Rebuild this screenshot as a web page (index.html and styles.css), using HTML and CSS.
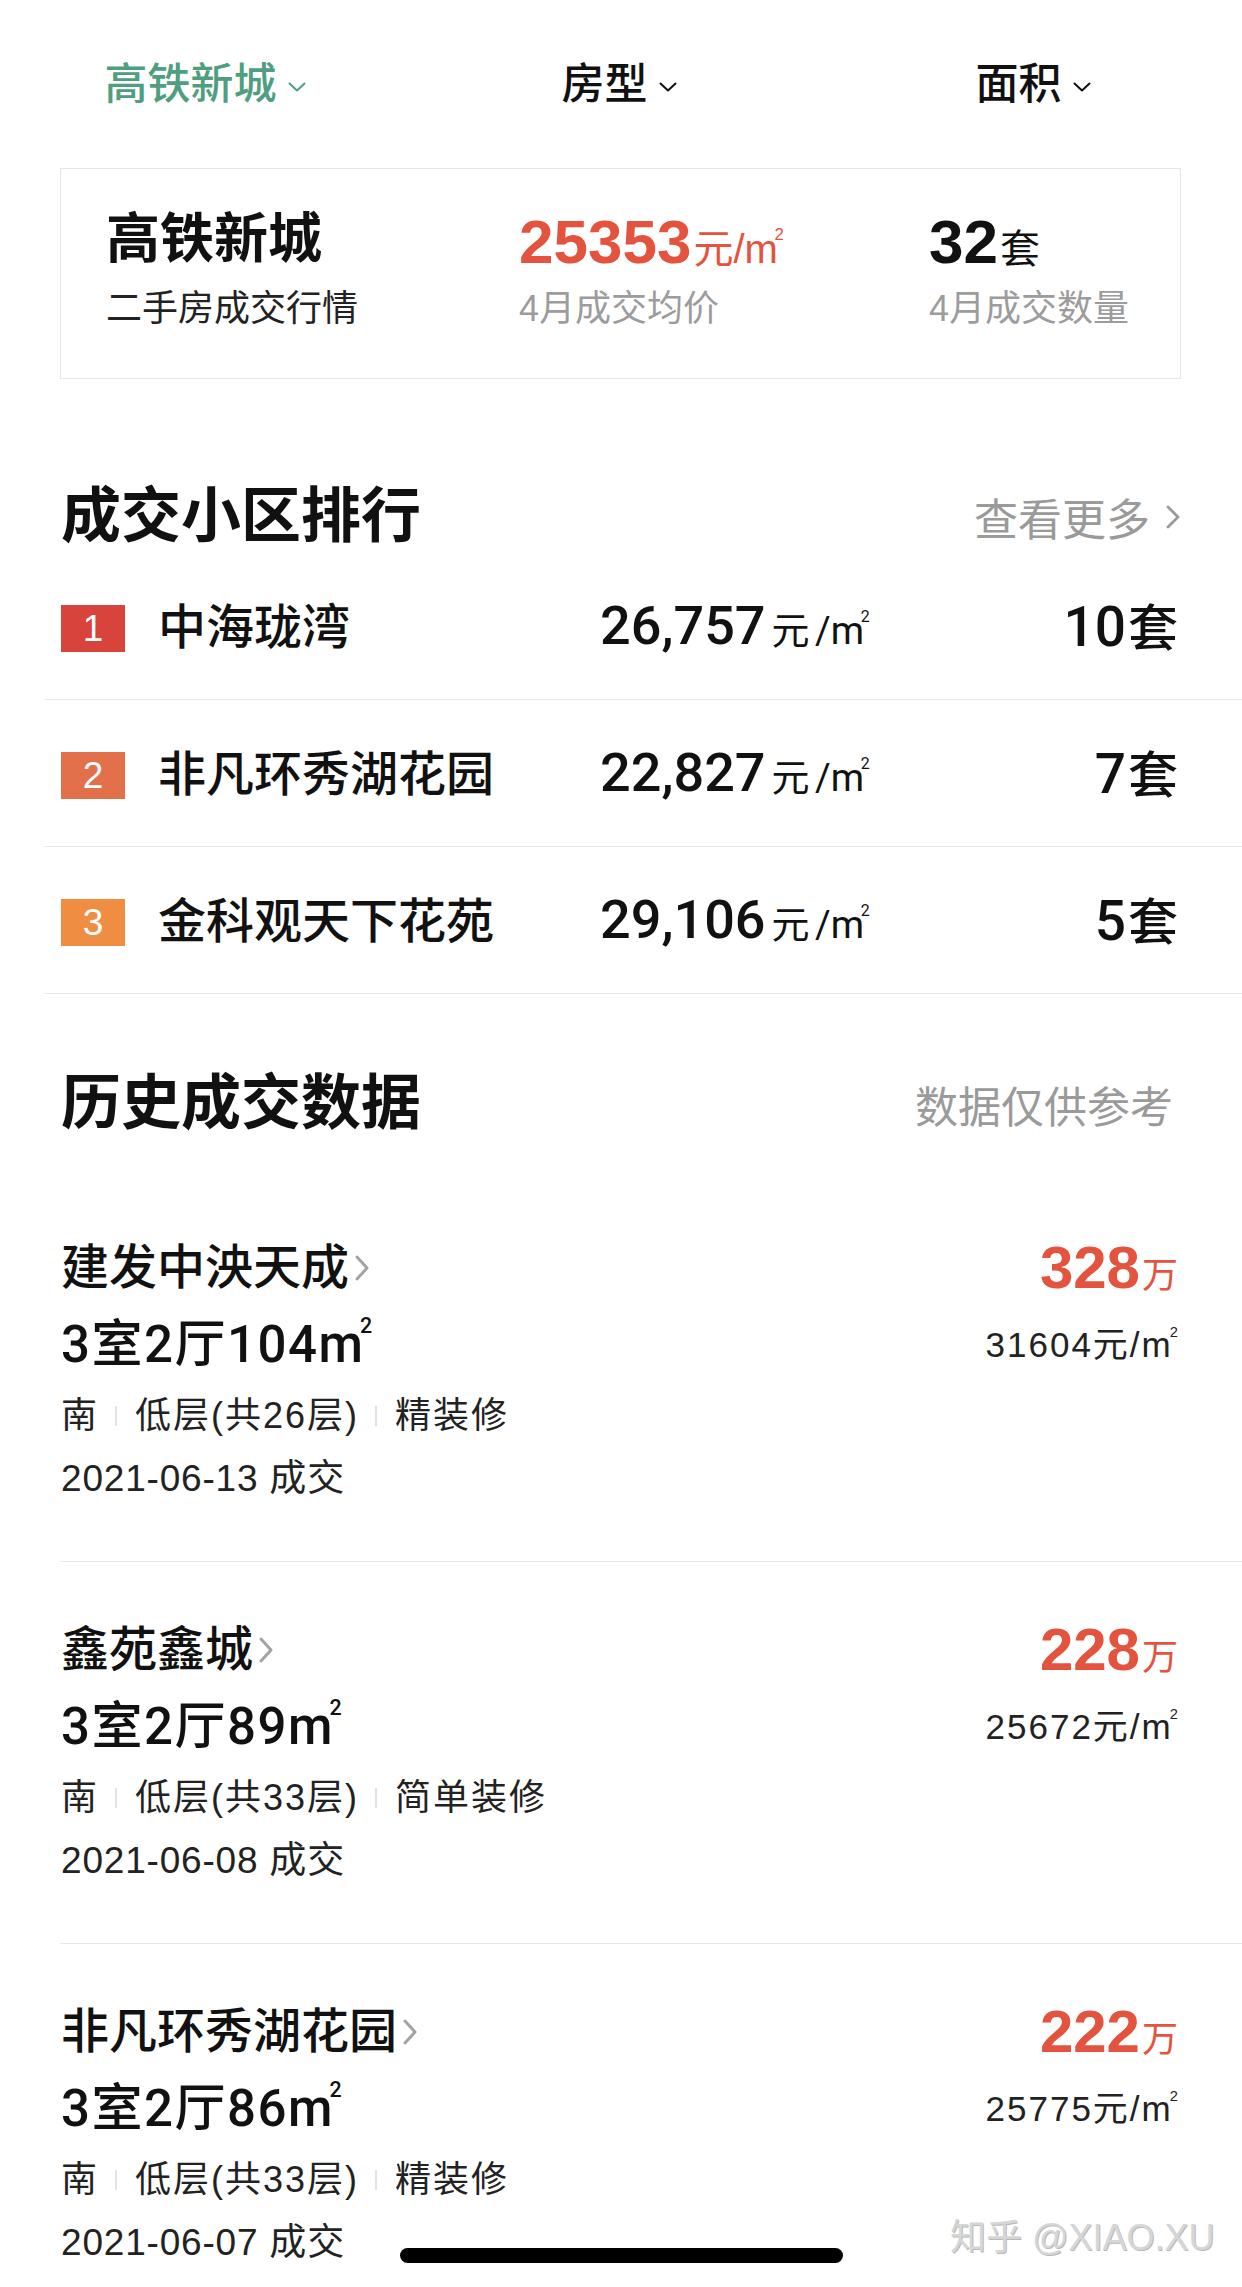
FILE: index.html
```html
<!DOCTYPE html>
<html lang="zh-CN">
<head>
<meta charset="utf-8">
<title>成交行情</title>
<link rel="stylesheet" href="styles.css">
</head>
<body>
<div class="page">
  <nav class="tabs">
    <div class="tab active"><span>高铁新城</span><svg class="caret" viewBox="0 0 18 10"><polyline points="1.5,1.5 9,8.5 16.5,1.5"/></svg></div>
    <div class="tab"><span>房型</span><svg class="caret" viewBox="0 0 18 10"><polyline points="1.5,1.5 9,8.5 16.5,1.5"/></svg></div>
    <div class="tab"><span>面积</span><svg class="caret" viewBox="0 0 18 10"><polyline points="1.5,1.5 9,8.5 16.5,1.5"/></svg></div>
  </nav>

  <section class="summary">
    <div class="sum-col">
      <div class="sum-title">高铁新城</div>
      <div class="sum-sub dark">二手房成交行情</div>
    </div>
    <div class="sum-col">
      <div class="sum-val red"><b>25353</b><span class="sum-unit">元/m<i class="sq">2</i></span></div>
      <div class="sum-sub">4月成交均价</div>
    </div>
    <div class="sum-col">
      <div class="sum-val"><b>32</b><span class="sum-unit">套</span></div>
      <div class="sum-sub">4月成交数量</div>
    </div>
  </section>

  <div class="sec-head rank-head">
    <h2>成交小区排行</h2>
    <span class="more">查看更多<svg class="more-chev" viewBox="0 0 16 26"><polyline points="3,3 13,13 3,23"/></svg></span>
  </div>

  <div class="rank-list">
    <div class="rank-row">
      <span class="badge b1">1</span>
      <span class="rk-name">中海珑湾</span>
      <span class="rk-price">26,757<span class="rk-unit">元 /m<i class="sq">2</i></span></span>
      <span class="rk-count">10<span class="tao">套</span></span>
    </div>
    <div class="rank-row">
      <span class="badge b2">2</span>
      <span class="rk-name">非凡环秀湖花园</span>
      <span class="rk-price">22,827<span class="rk-unit">元 /m<i class="sq">2</i></span></span>
      <span class="rk-count">7<span class="tao">套</span></span>
    </div>
    <div class="rank-row">
      <span class="badge b3">3</span>
      <span class="rk-name">金科观天下花苑</span>
      <span class="rk-price">29,106<span class="rk-unit">元 /m<i class="sq">2</i></span></span>
      <span class="rk-count">5<span class="tao">套</span></span>
    </div>
  </div>

  <div class="sec-head hist-head">
    <h2>历史成交数据</h2>
    <span class="note">数据仅供参考</span>
  </div>

  <div class="records">
    <div class="record">
      <div class="r-left">
        <div class="r-name">建发中泱天成<svg class="r-chev" viewBox="0 0 16 28"><polyline points="3,3 13,14 3,25"/></svg></div>
        <div class="r-rooms">3室2厅104m<i class="sq">2</i></div>
        <div class="r-meta">南<span class="vbar"></span>低层(共26层)<span class="vbar"></span>精装修</div>
        <div class="r-date">2021-06-13 成交</div>
      </div>
      <div class="r-right">
        <div class="r-price">328<span class="wan">万</span></div>
        <div class="r-unit">31604元/m<i class="sq">2</i></div>
      </div>
    </div>
    <div class="record">
      <div class="r-left">
        <div class="r-name">鑫苑鑫城<svg class="r-chev" viewBox="0 0 16 28"><polyline points="3,3 13,14 3,25"/></svg></div>
        <div class="r-rooms">3室2厅89m<i class="sq">2</i></div>
        <div class="r-meta">南<span class="vbar"></span>低层(共33层)<span class="vbar"></span>简单装修</div>
        <div class="r-date">2021-06-08 成交</div>
      </div>
      <div class="r-right">
        <div class="r-price">228<span class="wan">万</span></div>
        <div class="r-unit">25672元/m<i class="sq">2</i></div>
      </div>
    </div>
    <div class="record">
      <div class="r-left">
        <div class="r-name">非凡环秀湖花园<svg class="r-chev" viewBox="0 0 16 28"><polyline points="3,3 13,14 3,25"/></svg></div>
        <div class="r-rooms">3室2厅86m<i class="sq">2</i></div>
        <div class="r-meta">南<span class="vbar"></span>低层(共33层)<span class="vbar"></span>精装修</div>
        <div class="r-date">2021-06-07 成交</div>
      </div>
      <div class="r-right">
        <div class="r-price">222<span class="wan">万</span></div>
        <div class="r-unit">25775元/m<i class="sq">2</i></div>
      </div>
    </div>
  </div>

  <div class="watermark">知乎 @XIAO.XU</div>
  <div class="home-bar"></div>
</div>
</body>
</html>
```

FILE: styles.css
```css
html, body {
  margin: 0;
  padding: 0;
  background: #ffffff;
  overflow: hidden;
}

body {
  font-family: "Liberation Sans", "Noto Sans CJK SC", sans-serif;
  color: #111111;
}

.page {
  position: relative;
  width: 1242px;
  height: 2287px;
  overflow: hidden;
  background: #ffffff;
}

/* ---------- tabs ---------- */
.tabs {
  display: grid;
  grid-template-columns: repeat(3, 1fr);
  height: 168px;
  align-items: center;
}

.tab {
  display: flex;
  justify-content: center;
  align-items: center;
  gap: 11px;
  padding-right: 4px;
  font-size: 43px;
  font-weight: 500;
  line-height: 60px;
  color: #111111;
}

.tab.active {
  color: #4f9e7f;
}

.caret {
  width: 18px;
  height: 10px;
  margin-top: 6px;
  fill: none;
  stroke: currentColor;
  stroke-width: 2;
  stroke-linecap: round;
  stroke-linejoin: round;
}

/* ---------- summary card ---------- */
.summary {
  box-sizing: border-box;
  margin: 0 61px 0 60px;
  height: 211px;
  border: 1px solid #e6e6e6;
  display: grid;
  grid-template-columns: 413px 410px 1fr;
  padding: 38px 0 0 45px;
}

.sum-title {
  height: 64px;
  font-size: 54px;
  font-weight: 700;
  line-height: 64px;
  color: #111111;
}

.sum-val {
  height: 64px;
  padding-top: 6px;
  box-sizing: border-box;
  line-height: 64px;
  color: #111111;
  white-space: nowrap;
}

.sum-val b {
  font-size: 62px;
  font-weight: 700;
  line-height: 58px;
}

.sum-val.red {
  color: #e4533e;
}

.sum-unit {
  font-size: 40px;
  line-height: 58px;
  margin-left: 2px;
}

.sum-sub {
  height: 60px;
  margin-top: 8px;
  font-size: 36px;
  line-height: 60px;
  color: #9c9c9c;
}

.sum-sub.dark {
  color: #222222;
}

.sq {
  font-style: normal;
  font-size: 0.42em;
  line-height: 0;
  vertical-align: 1.35em;
  margin-left: -0.2em;
  letter-spacing: 0;
}

/* ---------- section heads ---------- */
.sec-head {
  display: flex;
  justify-content: space-between;
  align-items: center;
  height: 72px;
  padding: 0 61px;
}

.sec-head h2 {
  margin: 0;
  font-size: 60px;
  font-weight: 700;
  line-height: 72px;
  color: #111111;
}

.rank-head {
  margin-top: 102px;
}

.hist-head {
  margin-top: 74px;
  padding-right: 69px;
}

.more, .note {
  display: flex;
  align-items: center;
  font-size: 43px;
  color: #9a9a9a;
}

.more {
  font-size: 44px;
}

.more-chev {
  width: 16px;
  height: 26px;
  margin-left: 15px;
  fill: none;
  stroke: #9a9a9a;
  stroke-width: 2.8;
  stroke-linecap: round;
  stroke-linejoin: round;
}

/* ---------- ranking ---------- */
.rank-list {
  margin-left: 44px;
}

.rank-row {
  box-sizing: border-box;
  height: 147px;
  padding: 4px 64px 0 17px;
  border-bottom: 1px solid #e8e8e8;
  display: grid;
  grid-template-columns: 64px 475px 1fr auto;
  align-items: center;
  line-height: 64px;
}

.badge {
  width: 64px;
  height: 47px;
  display: flex;
  align-items: center;
  justify-content: center;
  color: #ffffff;
  font-size: 37px;
  line-height: 47px;
}

.b1 { background: #d8433c; }
.b2 { background: #e2704b; }
.b3 { background: #ef8d42; }

.rk-name {
  padding-left: 33px;
  font-size: 48px;
  font-weight: 500;
  color: #111111;
  white-space: nowrap;
}

.rk-price {
  font-family: "Roboto", "Noto Sans CJK SC", sans-serif;
  font-size: 54px;
  font-weight: 500;
  color: #111111;
  white-space: nowrap;
}

.rk-unit {
  font-size: 38px;
  font-weight: 400;
  margin-left: 6px;
  letter-spacing: 0;
  word-spacing: -4px;
}

.rk-count {
  font-family: "Roboto", "Noto Sans CJK SC", sans-serif;
  font-size: 55px;
  font-weight: 500;
  color: #111111;
  text-align: right;
  white-space: nowrap;
}

.tao {
  font-size: 50px;
  margin-left: 2px;
}

/* ---------- history records ---------- */
.records {
  margin-top: 40px;
  margin-left: 60px;
}

.record {
  display: flex;
  justify-content: space-between;
  padding: 53px 64px 48px 1px;
  border-bottom: 1px solid #e8e8e8;
}

.r-name {
  display: flex;
  align-items: center;
  height: 70px;
  font-size: 48px;
  font-weight: 500;
  line-height: 70px;
  color: #111111;
}

.r-chev {
  width: 16px;
  height: 28px;
  margin-left: 5px;
  fill: none;
  stroke: #a3a3a3;
  stroke-width: 3;
  stroke-linecap: round;
  stroke-linejoin: round;
}

.r-rooms {
  height: 84px;
  font-family: "Roboto", "Noto Sans CJK SC", sans-serif;
  font-size: 51px;
  font-weight: 500;
  line-height: 84px;
  letter-spacing: 1.5px;
  color: #111111;
}

.r-meta {
  display: flex;
  align-items: center;
  height: 58px;
  font-size: 36px;
  line-height: 58px;
  letter-spacing: 2px;
  color: #222222;
}

.vbar {
  display: inline-block;
  width: 2px;
  height: 20px;
  background: #e2e2e2;
  margin: 0 18px 0 16px;
}

.r-date {
  height: 68px;
  font-size: 37px;
  line-height: 68px;
  letter-spacing: 0.8px;
  color: #222222;
}

.r-right {
  text-align: right;
}

.r-price {
  height: 70px;
  font-size: 60px;
  font-weight: 700;
  line-height: 70px;
  color: #e4533e;
}

.wan {
  font-size: 36px;
  font-weight: 400;
  margin-left: 2px;
}

.r-unit {
  height: 84px;
  font-size: 35px;
  line-height: 84px;
  letter-spacing: 2px;
  color: #222222;
}

/* ---------- overlays ---------- */
.watermark {
  position: absolute;
  left: 950px;
  top: 2218px;
  font-size: 36px;
  line-height: 40px;
  color: #d6d6d6;
  text-shadow: 1px 1px 0 #b8b8b8;
  white-space: nowrap;
}

.home-bar {
  position: absolute;
  left: 400px;
  top: 2248px;
  width: 443px;
  height: 15px;
  border-radius: 8px;
  background: #000000;
}
```
